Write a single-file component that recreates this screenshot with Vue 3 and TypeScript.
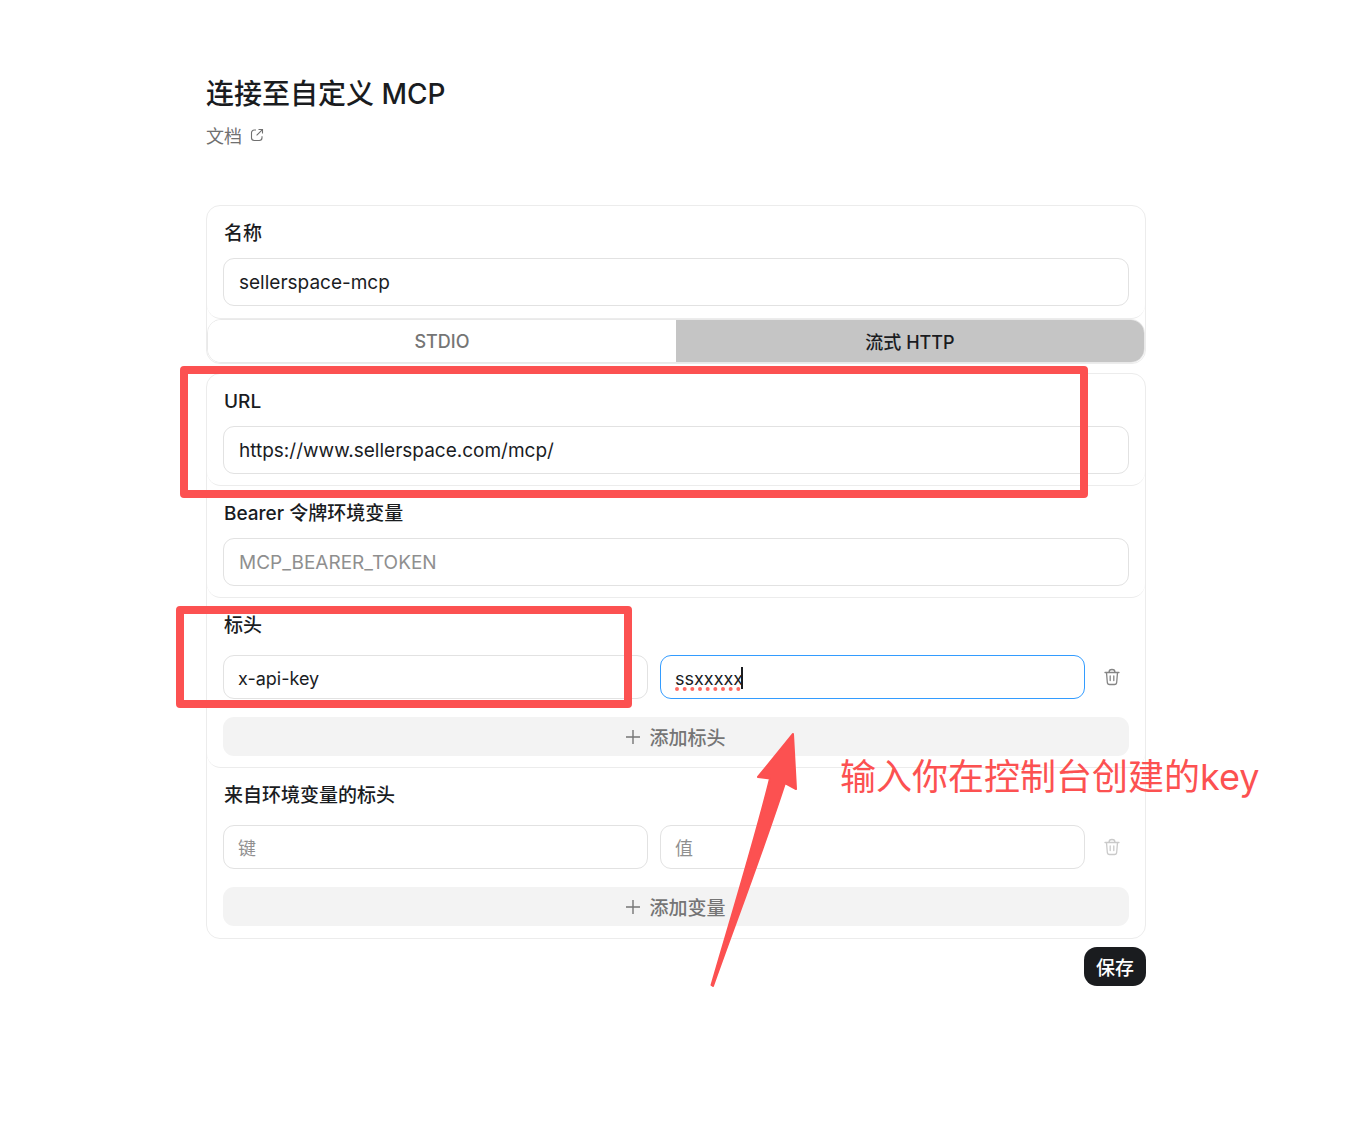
<script setup lang="ts">
import { ref } from 'vue'

type Transport = 'stdio' | 'http'

const name = ref('sellerspace-mcp')
const transport = ref<Transport>('http')
const url = ref('https://www.sellerspace.com/mcp/')
const bearer = ref('')
const headerKey = ref('x-api-key')
const headerValue = ref('ssxxxxx')
const envKey = ref('')
const envValue = ref('')
</script>

<template>
  <div class="page">
    <main class="content">
      <h1 class="title">连接至自定义 MCP</h1>
      <a class="docs" href="#">
        文档
        <svg class="docs-icon" viewBox="0 0 14 14" aria-hidden="true">
          <path d="M6 2H4.2A2.7 2.7 0 0 0 1.500 4.700V9.800A2.700 2.700 0 0 0 4.200 12.500H9.300A2.700 2.700 0 0 0 12 9.800V8.200" />
          <path d="M8.500 1.500H12.500V5.500M12.200 1.800L6.600 7.400" />
        </svg>
      </a>

      <form @submit.prevent>
        <div class="card card-name">
          <section class="section">
            <label class="label" for="name">名称</label>
            <input id="name" v-model="name" class="field" type="text" />
          </section>
          <div class="tabs" role="group" aria-label="传输方式">
            <button type="button" class="tab" :class="{ active: transport === 'stdio' }" @click="transport = 'stdio'">STDIO</button>
            <button type="button" class="tab" :class="{ active: transport === 'http' }" @click="transport = 'http'">流式 HTTP</button>
          </div>
        </div>

        <div class="card">
          <section class="section">
            <label class="label" for="url">URL</label>
            <input id="url" v-model="url" class="field" type="text" />
          </section>

          <section class="section">
            <label class="label" for="bearer">Bearer 令牌环境变量</label>
            <input id="bearer" v-model="bearer" class="field" type="text" placeholder="MCP_BEARER_TOKEN" />
          </section>

          <section class="section">
            <label class="label" for="header-key">标头</label>
            <div class="pair">
              <input id="header-key" v-model="headerKey" class="field" type="text" />
              <div class="editing">
                <input v-model="headerValue" class="field focused" type="text" aria-label="标头值" spellcheck="false" />
                <svg class="spelling" viewBox="0 0 66 4" aria-hidden="true">
                  <path d="M2 2H71" pathLength="9" />
                </svg>
                <span class="caret"></span>
              </div>
              <button type="button" class="remove" aria-label="删除标头">
                <svg viewBox="0 0 16 18" aria-hidden="true">
                  <path d="M1 4.500H15M5 4.300C5 2.300 6.200 1.500 8 1.500S11 2.300 11 4.300M2.500 4.600L3.300 14.200C3.400 15.900 4.300 16.500 5.600 16.500H10.400C11.700 16.500 12.600 15.900 12.700 14.200L13.500 4.600M6.200 8V12.500M9.800 8V12.500" />
                </svg>
              </button>
            </div>
            <button type="button" class="add">
              <svg viewBox="0 0 14 14" aria-hidden="true"><path d="M7 0V14M0 7H14" /></svg>
              添加标头
            </button>
          </section>

          <section class="section">
            <label class="label" for="env-key">来自环境变量的标头</label>
            <div class="pair">
              <input id="env-key" v-model="envKey" class="field" type="text" placeholder="键" />
              <input v-model="envValue" class="field" type="text" placeholder="值" aria-label="值" />
              <button type="button" class="remove" disabled aria-label="删除变量">
                <svg viewBox="0 0 16 18" aria-hidden="true">
                  <path d="M1 4.500H15M5 4.300C5 2.300 6.200 1.500 8 1.500S11 2.300 11 4.300M2.500 4.600L3.300 14.200C3.400 15.900 4.300 16.500 5.600 16.500H10.400C11.700 16.500 12.600 15.900 12.700 14.200L13.500 4.600M6.200 8V12.500M9.800 8V12.500" />
                </svg>
              </button>
            </div>
            <button type="button" class="add">
              <svg viewBox="0 0 14 14" aria-hidden="true"><path d="M7 0V14M0 7H14" /></svg>
              添加变量
            </button>
          </section>

          <!-- Tutorial marks laid over the form -->
          <div class="mark mark-url"></div>
          <div class="mark mark-header"></div>
          <svg class="arrow" viewBox="0 0 88 256" aria-hidden="true">
            <path d="M83 3L48 46L60 47.500C46 105 20 190 1.500 254L3 255C26 190 53 120 75 52L86 58Z" />
          </svg>
          <p class="note">输入你在控制台创建的key</p>
        </div>

        <div class="actions">
          <button type="submit" class="save">保存</button>
        </div>
      </form>
    </main>
  </div>
</template>

<style>
body {
  margin: 0;
  background: #fff;
}
</style>

<style scoped>
.page {
  padding: 73px 108px 72px 100px;
  font-family: Inter, "Noto Sans CJK SC", sans-serif;
  font-size: 19px;
  color: #1a1c1f;
}

.page *,
.page *::before {
  box-sizing: border-box;
}

.content {
  max-width: 940px;
  margin: 0 auto;
}

.title {
  margin: 0;
  font-size: 28px;
  line-height: 42px;
  font-weight: 500;
}

.docs {
  display: flex;
  width: fit-content;
  align-items: center;
  gap: 8px;
  margin: 8px 0 55px;
  font-size: 18px;
  line-height: 27px;
  color: #707070;
  text-decoration: none;
}

.docs-icon {
  width: 14px;
  height: 14px;
  margin-bottom: 3px;
  fill: none;
  stroke: currentColor;
  stroke-width: 1.1;
}

.card {
  position: relative;
  margin-bottom: 8px;
  border: 1px solid #ececec;
  border-radius: 14px;
}

.card-name {
  margin-bottom: 9px;
}

.section {
  padding: 14px 16px 11px;
  border-bottom: 1px solid #ececec;
  border-radius: 0 0 14px 14px;
}

.card-name .section {
  padding-bottom: 12px;
}

.section:nth-of-type(4) {
  padding-bottom: 12px;
  border-bottom: 0;
}

.label {
  display: block;
  width: fit-content;
  margin: 0 0 11px 1px;
  line-height: 27px;
  font-weight: 500;
}

.field {
  display: block;
  width: 100%;
  height: 48px;
  min-width: 0;
  padding: 0 15px;
  border: 1px solid #e2e2e2;
  border-radius: 11px;
  outline: 0;
  background: #fff;
  font: inherit;
  color: inherit;
}

.field::placeholder {
  color: #8f8f8f;
  opacity: 1;
}

.pair {
  display: grid;
  grid-template-columns: 1fr 1fr 32px;
  gap: 12px;
  margin: 16px 0 18px;
}

.pair .field {
  height: 44px;
  padding: 2px 14px 0;
  font-size: 18px;
}

.pair .field.focused {
  border-color: #339cff;
}

.editing {
  position: relative;
}

.spelling {
  position: absolute;
  left: 15px;
  top: 32px;
  width: 66px;
  height: 4px;
  fill: none;
  stroke: #ff6b63;
  stroke-width: 4;
  stroke-linecap: round;
  stroke-dasharray: 0 1;
}

.caret {
  position: absolute;
  left: 81px;
  top: 12px;
  width: 2px;
  height: 22px;
  background: #1a1c1f;
}

.remove {
  display: flex;
  align-items: center;
  justify-content: center;
  padding: 0 3px 0 0;
  border: 0;
  background: none;
  color: #858585;
}

.remove:disabled {
  color: #cacaca;
}

.remove svg {
  width: 16px;
  height: 18px;
  fill: none;
  stroke: currentColor;
  stroke-width: 1.3;
  stroke-linecap: round;
}

.add {
  display: flex;
  width: 100%;
  height: 39px;
  align-items: center;
  justify-content: center;
  gap: 9px;
  padding: 0;
  border: 0;
  border-radius: 11px;
  background: #f3f3f3;
  font: inherit;
  font-weight: 500;
  color: #757575;
}

.add svg {
  width: 14px;
  height: 14px;
  fill: none;
  stroke: currentColor;
  stroke-width: 1.4;
}

.tabs {
  display: flex;
  height: 44px;
  overflow: hidden;
  border: 1px solid #e9e9e9;
  border-radius: 14px;
}

.tab {
  flex: 1;
  padding: 0;
  border: 0;
  background: #fff;
  font: inherit;
  font-size: 18px;
  font-weight: 500;
  color: #757575;
}

.tab.active {
  background: #c5c5c5;
  color: #1a1c1f;
}

.actions {
  display: flex;
  justify-content: flex-end;
}

.save {
  height: 39px;
  padding: 0 12px;
  border: 0;
  border-radius: 13px;
  background: #1a1c1f;
  font: inherit;
  font-weight: 500;
  color: #fff;
}

.mark {
  position: absolute;
  border: 8px solid #fc5151;
  border-radius: 4px;
  pointer-events: none;
}

.mark-url {
  left: -27px;
  right: 57px;
  top: -8px;
  height: 132px;
}

.mark-header {
  left: -31px;
  top: 232px;
  width: 456px;
  height: 102px;
}

.arrow {
  position: absolute;
  left: 503px;
  top: 357px;
  width: 88px;
  height: 256px;
  fill: #fc5151;
  stroke: #fc5151;
  stroke-width: 2;
  stroke-linejoin: round;
  pointer-events: none;
}

.note {
  position: absolute;
  left: 633px;
  top: 376px;
  margin: 0;
  font-size: 36px;
  line-height: 54px;
  white-space: nowrap;
  color: #fc5151;
}
</style>
